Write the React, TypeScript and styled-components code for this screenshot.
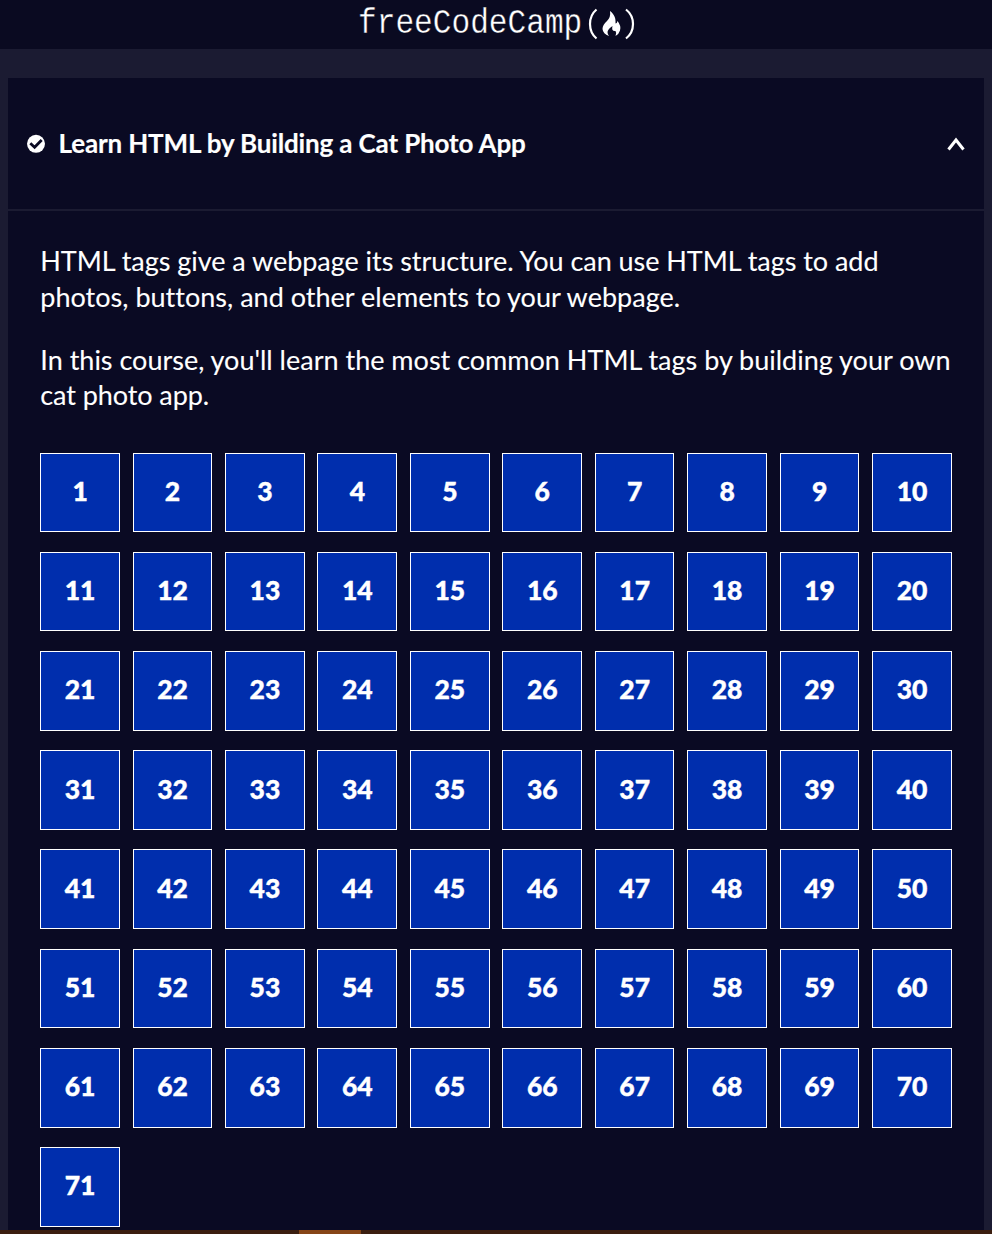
import React from "react";
import styled, { createGlobalStyle } from "styled-components";

const GlobalStyle = createGlobalStyle`
  * { box-sizing: border-box; }
  body {
    margin: 0;
    background: #1b1b32;
    color: #fff;
    font-family: Lato, sans-serif;
    overflow: hidden;
  }
`;

const Page = styled.div`
  height: 1234px;
  display: flex;
  flex-direction: column;
`;

const Header = styled.header`
  height: 49px;
  flex: none;
  display: flex;
  align-items: flex-start;
  background: #0a0a21;
  padding-left: 358px;
`;

const Wordmark = styled.span`
  display: block;
  width: 226px;
  height: 49px;
  line-height: 49px;
  font-family: "Liberation Mono", monospace;
  font-size: 35px;
  white-space: nowrap;
  transform: scaleX(0.89);
  transform-origin: 0 0;
  -webkit-text-stroke: 0.35px #0a0a21;
`;

const Mark = styled.svg`
  flex: none;
  width: 54px;
  height: 40px;
  margin: 4px 0 0 0;
`;

const Block = styled.section`
  flex: 1;
  min-height: 0;
  margin: 29px 8px 0;
  background: #0a0a23;
  overflow: hidden;
`;

const BlockHeader = styled.button`
  width: 100%;
  height: 133px;
  display: flex;
  align-items: center;
  padding: 0 18px;
  border: 0;
  border-bottom: 2px solid #1b1b32;
  background: transparent;
  color: inherit;
`;

const CheckIcon = styled.svg`
  width: 20px;
  height: 20px;
  flex: none;
`;

const Title = styled.span`
  flex: 1;
  margin-left: 12.5px;
  padding-bottom: 2px;
  text-align: left;
  font: 700 26px/36px Lato, sans-serif;
  letter-spacing: -0.15px;
  -webkit-text-stroke: 0.15px #fff;
`;

const Caret = styled.svg`
  width: 20px;
  height: 14px;
  flex: none;
`;

const Intro = styled.div`
  padding: 32px 32px 0 32.3px;
  font-size: 27px;
  line-height: 35.6px;
  font-variant-ligatures: none;
  -webkit-text-stroke: 0.1px #fff;
`;

const Paragraph = styled.p`
  margin: 0 0 27.5px;
  white-space: nowrap;
`;

const Line = styled.span<{ $spacing?: number }>`
  display: block;
  letter-spacing: ${(p) => p.$spacing ?? 0}px;
`;

const Steps = styled.div`
  display: grid;
  grid-template-columns: repeat(10, 79.67px);
  grid-auto-rows: 79.7px;
  column-gap: 12.79px;
  row-gap: 19.54px;
  margin: 39.7px 0 0 32.1px;
`;

const Step = styled.a`
  display: flex;
  align-items: center;
  justify-content: center;
  padding: 0 0 2.9px 0.3px;
  border: 1px solid #fff;
  background: #002ead;
  font-size: 26.5px;
  font-weight: 900;
  -webkit-text-stroke: 0.4px #fff;
`;

const Track = styled.div`
  height: 4px;
  flex: none;
  padding-left: 299px;
  background: #3b1e10;
`;

const Thumb = styled.div`
  width: 62px;
  height: 4px;
  background: #864517;
`;

const steps = Array.from({ length: 71 }, (_, i) => i + 1);

export default function App() {
  return (
    <Page>
      <GlobalStyle />
      <Header>
        <Wordmark>freeCodeCamp</Wordmark>
        <Mark viewBox="0 0 54 40" fill="none">
          <path d="M12.500 5.500Q6 11 6 20Q6 29 12.500 34.500M42 5.500Q49 11 49 20Q49 29 42 34.500" stroke="#fff" strokeWidth="2.200" />
          <path d="M26 7C30.500 10.500 32 14.500 31.500 19.500Q33 19.500 33.500 17Q37.500 22 36 26.500Q35 30 31.500 32Q33 29 31.500 27Q27 27.500 28.500 22Q24 25 23.500 28Q23.500 30.500 25 32Q19 30 18.500 25Q18.500 21 23 17Q27 13 26 7Z" fill="#fff" />
        </Mark>
      </Header>
      <Block>
        <BlockHeader>
          <CheckIcon viewBox="0 0 20 20">
            <circle cx="10" cy="9.800" r="9" fill="#fff" />
            <path d="M4.300 9.300L8.600 13.300L15.700 6" fill="none" stroke="#0a0a23" strokeWidth="2.800" />
          </CheckIcon>
          <Title>Learn HTML by Building a Cat Photo App</Title>
          <Caret viewBox="0 0 20 14">
            <path d="M2.500 12.500L10 3L17.500 12.500" fill="none" stroke="#fff" strokeWidth="3" />
          </Caret>
        </BlockHeader>
        <Intro>
          <Paragraph>
            <Line $spacing={-0.04}>HTML tags give a webpage its structure. You can use HTML tags to add</Line>
            <Line $spacing={0.02}>photos, buttons, and other elements to your webpage.</Line>
          </Paragraph>
          <Paragraph>
            <Line>In this course, you'll learn the most common HTML tags by building your own</Line>
            <Line $spacing={-0.08}>cat photo app.</Line>
          </Paragraph>
        </Intro>
        <Steps>
          {steps.map((n) => (
            <Step key={n}>{n}</Step>
          ))}
        </Steps>
      </Block>
      <Track>
        <Thumb />
      </Track>
    </Page>
  );
}
